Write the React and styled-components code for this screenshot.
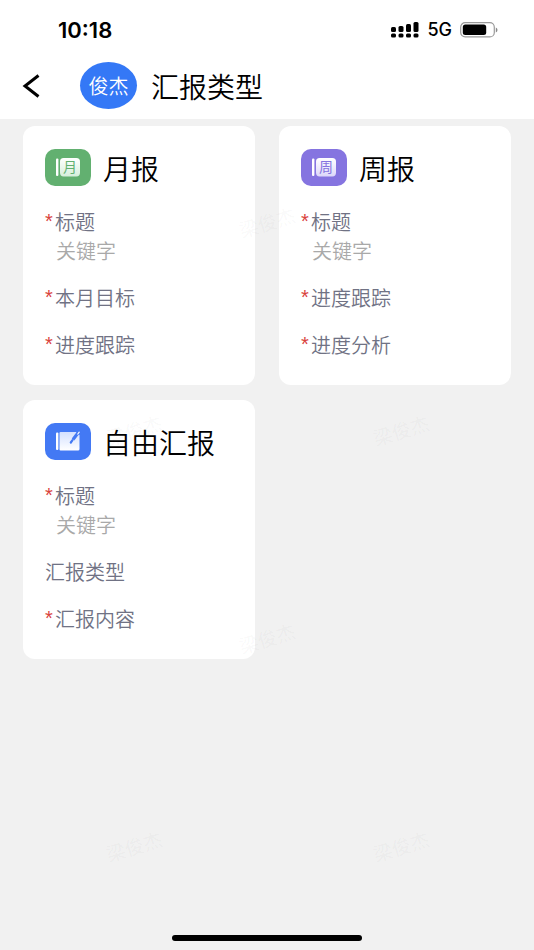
import React from 'react'
import styled, { createGlobalStyle } from 'styled-components'

const GlobalStyle = createGlobalStyle`
  * {
    box-sizing: border-box;
  }

  body {
    margin: 0;
    background: #f1f1f1;
    font-family: 'Noto Sans CJK SC', sans-serif;
  }
`

const Page = styled.div`
  position: relative;
  display: flex;
  flex-direction: column;
  min-height: 100vh;
  overflow: hidden;
`

const StatusBar = styled.div`
  display: flex;
  align-items: center;
  justify-content: space-between;
  height: 52px;
  padding: 7px 36px 0 58px;
  background: #fff;
  font-family: Inter, sans-serif;
`

const Time = styled.time`
  font-size: 22px;
  font-weight: 600;
`

const StatusIcons = styled.div`
  display: flex;
  align-items: center;
  gap: 8px;
`

const Network = styled.span`
  font-size: 18px;
  font-weight: 500;
`

const Header = styled.header`
  display: flex;
  align-items: center;
  height: 67px;
  padding: 0 20px;
  background: #fff;
`

const BackButton = styled.button`
  display: flex;
  width: 60px;
  padding: 0;
  border: 0;
  background: none;
  cursor: pointer;
`

const Avatar = styled.span`
  display: flex;
  align-items: center;
  justify-content: center;
  width: 57px;
  height: 47px;
  border-radius: 50%;
  background: #3478f6;
  color: #fff;
  font-size: 20px;
  font-weight: 350;
  line-height: 28px;
`

const PageTitle = styled.h1`
  margin: 0 0 0 14px;
  font-size: 28px;
  font-weight: 350;
  line-height: 36px;
`

const CardGrid = styled.main`
  display: grid;
  grid-template-columns: 1fr 1fr;
  gap: 15px 24px;
  padding: 7px 23px;
`

const Card = styled.section`
  padding: 23px 22px 26px;
  border-radius: 12px;
  background: #fff;
`

const CardHeader = styled.div`
  display: flex;
  align-items: center;
  gap: 12px;
  height: 37px;
  margin-bottom: 21px;
`

const CardTitle = styled.h2`
  margin: 0;
  font-size: 28px;
  font-weight: 350;
  line-height: 36px;
`

const FieldList = styled.ul`
  display: flex;
  flex-direction: column;
  gap: 18px;
  margin: 0;
  padding: 0;
  list-style: none;
  font-size: 20px;
  font-weight: 350;
  line-height: 29px;
`

const Label = styled.div`
  display: flex;
  color: #707284;
`

const Required = styled.span`
  width: 10px;
  color: #d9413c;
  font-family: 'Liberation Sans', sans-serif;
`

const Hint = styled.div`
  padding-left: 11px;
  color: #a9a9a9;
`

const HomeIndicator = styled.div`
  width: 190px;
  height: 6px;
  margin: auto auto 9px;
  border-radius: 3px;
  background: #000;
`

const Watermarks = styled.div`
  position: absolute;
  inset: 0;
  pointer-events: none;
`

const Watermark = styled.span`
  position: absolute;
  left: ${({ $left }) => $left};
  top: ${({ $top }) => $top};
  color: rgba(110, 110, 110, 0.05);
  font-size: 19px;
  line-height: 24px;
  white-space: nowrap;
  transform: translate(-50%, -50%) rotate(-17deg);
`

const SignalIcon = () => (
  <svg width="28" height="16" viewBox="0 0 28 16" aria-hidden="true">
    <rect x="0" y="5" width="5" height="5" rx="1.5" />
    <rect x="7.5" y="4" width="5" height="6" rx="1.5" />
    <rect x="15" y="2" width="5" height="8" rx="1.5" />
    <rect x="22.5" y="0" width="5" height="10" rx="1.5" />
    {[0, 7.5, 15, 22.5].map((x) => (
      <rect key={x} x={x} y="11.5" width="5" height="4" rx="1.5" />
    ))}
  </svg>
)

const BatteryIcon = () => (
  <svg width="38" height="16" viewBox="0 0 38 16" aria-hidden="true">
    <rect x="0.7" y="0.7" width="33.6" height="14.2" rx="4.5" fill="none" stroke="#999" strokeWidth="1.2" />
    <rect x="2.8" y="2.6" width="23.4" height="10.4" rx="2.5" />
    <path d="M35.8 5.5v5c2.2-.8 2.2-4.2 0-5z" fill="#888" />
  </svg>
)

const BackIcon = () => (
  <svg width="22" height="24" viewBox="0 0 22 24" aria-hidden="true">
    <path d="M18.5 1.5L5 12l13.5 10.5" fill="none" stroke="#000" strokeWidth="3" />
  </svg>
)

const ReportIcon = ({ id, color, tint, char }) => (
  <svg width="46" height="37" viewBox="0 0 46 37" aria-hidden="true">
    <defs>
      <linearGradient id={id} x1="0" y1="0" x2="0" y2="1">
        <stop offset="0" stopColor={char ? '#fff' : tint} />
        <stop offset="1" stopColor={char ? tint : '#fff'} />
      </linearGradient>
    </defs>
    <rect width="46" height="37" rx="10" fill={color} />
    <rect x="11" y="9.5" width="2.4" height="17.5" rx="1" fill="#fff" />
    {char ? (
      <>
        <rect x="15" y="9" width="20" height="18.4" rx="3.6" fill={`url(#${id})`} />
        <text x="25" y="23.2" fontSize="14" fontWeight="400" textAnchor="middle" fill={color}>
          {char}
        </text>
      </>
    ) : (
      <>
        <path d="M15.5 9H31l3.500 3V26a1.500 1.500 0 0 1-1.500 1.500H15.500a1 1 0 0 1-1-1V10a1 1 0 0 1 1-1z" fill={`url(#${id})`} />
        <path d="M34.500 8l-6.500 8.500" stroke={color} strokeWidth="3.200" fill="none" />
        <path d="M27.500 17.200l-1.700 2.300" stroke={color} strokeWidth="2.200" strokeLinecap="round" fill="none" />
        <path d="M34.200 9.200l-1.400 1.800" stroke="#fff" strokeWidth="1.200" strokeLinecap="round" fill="none" />
      </>
    )}
  </svg>
)

const reports = [
  {
    id: 'month',
    title: '月报',
    char: '月',
    color: '#62b070',
    tint: '#d5efdb',
    fields: [
      { label: '标题', hint: '关键字', required: true },
      { label: '本月目标', required: true },
      { label: '进度跟踪', required: true },
    ],
  },
  {
    id: 'week',
    title: '周报',
    char: '周',
    color: '#8574e0',
    tint: '#dcd7fa',
    fields: [
      { label: '标题', hint: '关键字', required: true },
      { label: '进度跟踪', required: true },
      { label: '进度分析', required: true },
    ],
  },
  {
    id: 'free',
    title: '自由汇报',
    color: '#4379f4',
    tint: '#d3e0ff',
    fields: [
      { label: '标题', hint: '关键字', required: true },
      { label: '汇报类型' },
      { label: '汇报内容', required: true },
    ],
  },
]

const watermarks = [
  ['50%', '222px'],
  ['25%', '430px'],
  ['75%', '430px'],
  ['50%', '638px'],
  ['25%', '846px'],
  ['75%', '846px'],
]

const ReportCard = ({ report }) => (
  <Card>
    <CardHeader>
      <ReportIcon id={report.id} color={report.color} tint={report.tint} char={report.char} />
      <CardTitle>{report.title}</CardTitle>
    </CardHeader>
    <FieldList>
      {report.fields.map(({ label, hint, required }) => (
        <li key={label}>
          <Label>
            {required && <Required>*</Required>}
            {label}
          </Label>
          {hint && <Hint>{hint}</Hint>}
        </li>
      ))}
    </FieldList>
  </Card>
)

export default () => (
  <Page>
    <GlobalStyle />
    <StatusBar>
      <Time>10:18</Time>
      <StatusIcons>
        <SignalIcon />
        <Network>5G</Network>
        <BatteryIcon />
      </StatusIcons>
    </StatusBar>
    <Header>
      <BackButton type="button" aria-label="返回">
        <BackIcon />
      </BackButton>
      <Avatar>俊杰</Avatar>
      <PageTitle>汇报类型</PageTitle>
    </Header>
    <CardGrid>
      {reports.map((report) => (
        <ReportCard key={report.id} report={report} />
      ))}
    </CardGrid>
    <HomeIndicator />
    <Watermarks aria-hidden="true">
      {watermarks.map(([left, top]) => (
        <Watermark key={left + top} $left={left} $top={top}>
          梁俊杰
        </Watermark>
      ))}
    </Watermarks>
  </Page>
)
